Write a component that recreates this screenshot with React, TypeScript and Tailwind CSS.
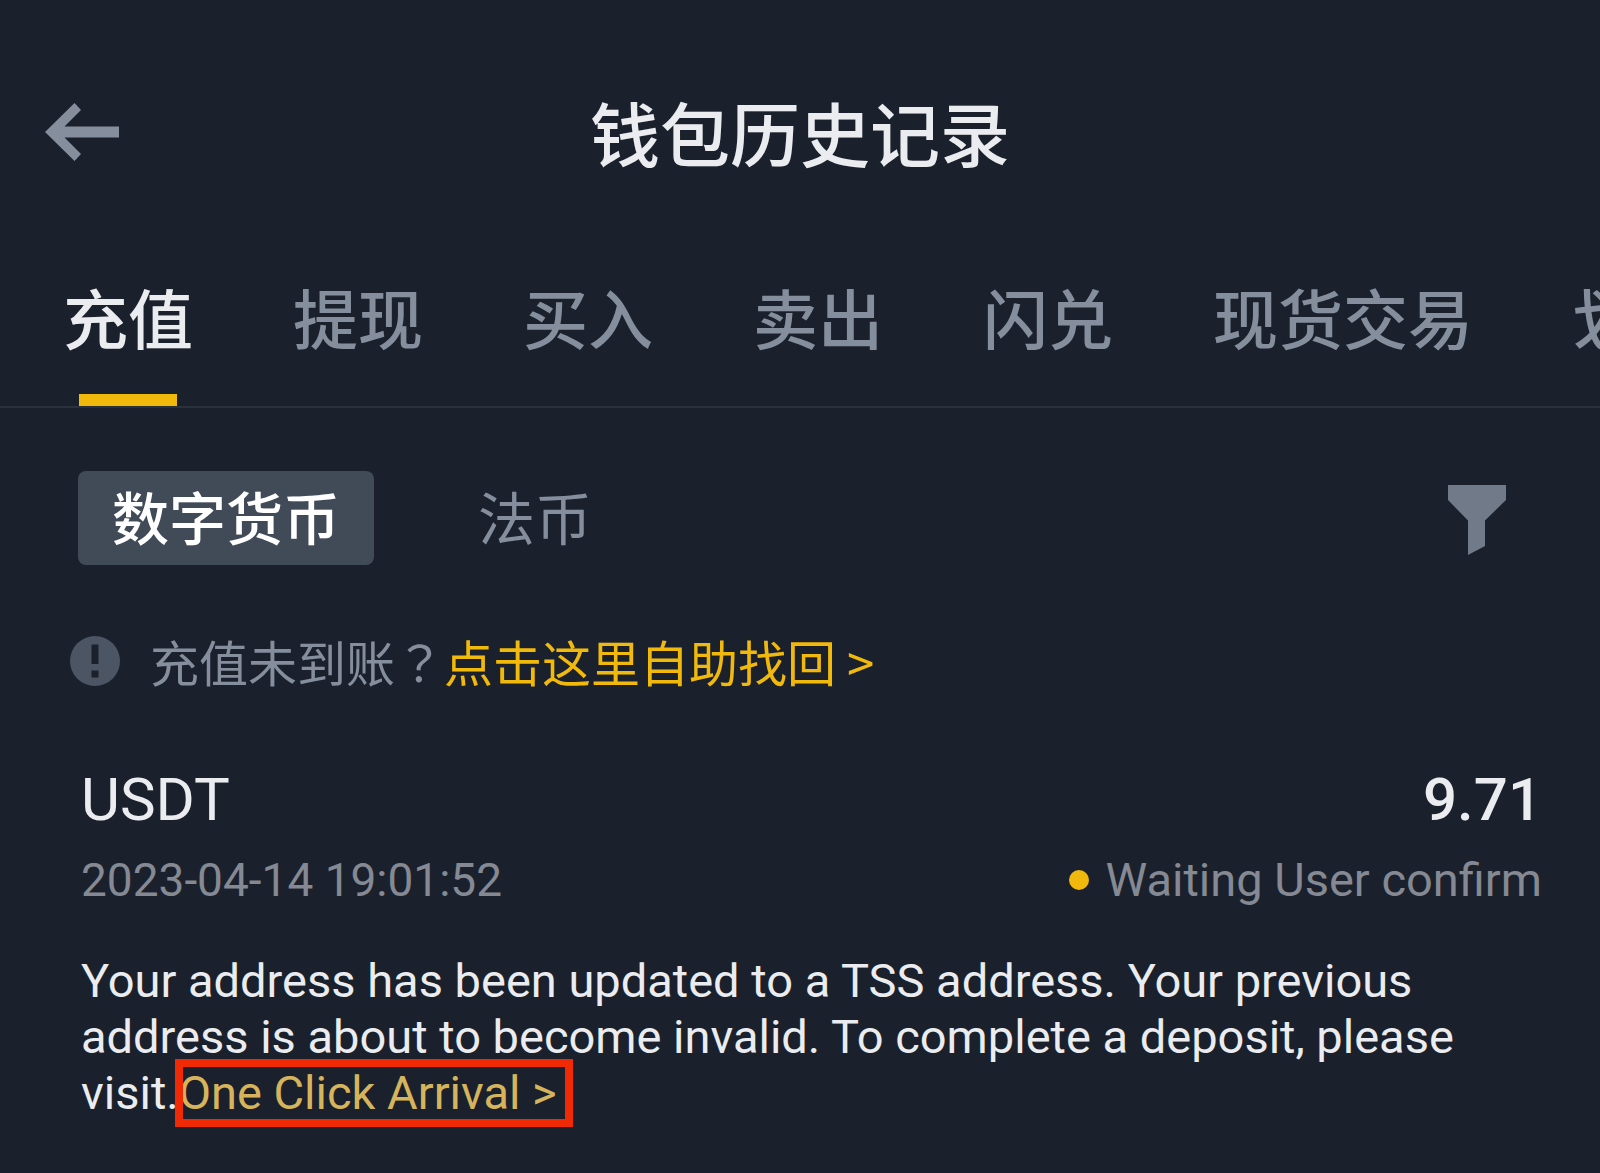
import { useState } from "react";

const tabs = ["充值", "提现", "买入", "卖出", "闪兑", "现货交易", "划转"];
const currencyTypes = ["数字货币", "法币"];

interface DepositRecord {
  coin: string;
  time: string;
  amount: string;
  status: string;
}

const record: DepositRecord = {
  coin: "USDT",
  time: "2023-04-14 19:01:52",
  amount: "9.71",
  status: "Waiting User confirm",
};

const BackIcon = () => (
  <svg width="74" height="58" viewBox="0 0 74 58" aria-hidden="true">
    <path
      d="M0 29 29.5 0 36 7 19.500 23.500H74V34.500H19.500L36 51 29.500 58Z"
      fill="#848e9c"
    />
  </svg>
);

const FilterIcon = () => (
  <svg width="58" height="70" viewBox="0 0 58 70" aria-hidden="true">
    <path d="M0 0H58V15L37 35.500V61L20 70V35.500L0 15Z" fill="#717a89" />
  </svg>
);

const InfoIcon = () => (
  <svg width="50" height="50" viewBox="0 0 50 50" aria-hidden="true" className="shrink-0">
    <circle cx="25" cy="25" r="25" fill="#4c5564" />
    <path d="M21.500 8.500H28.500V28H21.500ZM21.500 34.500H28.500V41.500H21.500Z" fill="#1b212c" />
  </svg>
);

const Header = () => (
  <header className="grid grid-cols-[1fr_auto_1fr] items-center px-[45px] pt-[80px]">
    <button type="button" aria-label="返回" className="w-[74px]">
      <BackIcon />
    </button>
    <h1 className="text-[70px] leading-[104px] font-medium text-[#eaecef]">钱包历史记录</h1>
  </header>
);

interface TabsProps {
  active: string;
  onChange: (tab: string) => void;
}

const Tabs = ({ active, onChange }: TabsProps) => (
  <nav className="mt-[84px] flex gap-[100px] overflow-hidden border-b-2 border-[#2b313c] pl-[63px]">
    {tabs.map((tab) => (
      <button
        key={tab}
        type="button"
        onClick={() => onChange(tab)}
        className={
          tab === active
            ? "flex shrink-0 flex-col items-center text-[65px] leading-[96px] font-medium text-[#eaecef]"
            : "flex shrink-0 flex-col items-center text-[65px] leading-[96px] font-medium text-[#848e9c]"
        }
      >
        {tab}
        {tab === active && <span className="mt-[30px] h-3 w-[98px] bg-[#f0b90b]" />}
      </button>
    ))}
  </nav>
);

const CurrencyFilter = () => {
  const [type, setType] = useState(currencyTypes[0]);

  return (
    <div className="flex items-center justify-between pr-9">
      <div className="flex gap-[70px]">
        {currencyTypes.map((item) => (
          <button
            key={item}
            type="button"
            onClick={() => setType(item)}
            className={
              item === type
                ? "rounded-lg bg-[#414b58] px-[34px] pb-1.5 text-[57px] leading-[88px] font-medium text-white"
                : "rounded-lg px-[34px] pb-1.5 text-[57px] leading-[88px] text-[#848e9c]"
            }
          >
            {item}
          </button>
        ))}
      </div>
      <button type="button" aria-label="筛选" className="pt-1">
        <FilterIcon />
      </button>
    </div>
  );
};

const RecordItem = ({ coin, time, amount, status }: DepositRecord) => (
  <article className="mt-[63px] pl-[3px] font-['Roboto','Noto_Sans_CJK_SC',sans-serif]">
    <div className="flex items-center justify-between text-[60px] leading-[80px] text-[#eaecef]">
      <h2>{coin}</h2>
      <p className="font-medium">{amount}</p>
    </div>
    <div className="flex items-center justify-between leading-[80px] text-[#848993]">
      <time className="text-[46px]">{time}</time>
      <p className="flex items-center gap-4 text-[47px]">
        <span className="size-5 rounded-full bg-[#f0b90b]" />
        {status}
      </p>
    </div>
    <p className="mt-[33px] text-[47px] leading-[56px] text-[#eaecef]">
      Your address has been updated to a TSS address. Your previous address is about to become
      invalid. To complete a deposit, please visit.
      <a
        href="#one-click-arrival"
        className="-my-1 inline-block pr-3 leading-[60px] text-[#d6b45c] outline-8 -outline-offset-4 outline-[#f02a05]"
      >
        One Click Arrival &gt;
      </a>
    </p>
  </article>
);

export default function App() {
  const [tab, setTab] = useState(tabs[0]);

  return (
    <div className="min-h-screen bg-[#1b212c] font-['Noto_Sans_CJK_SC',sans-serif]">
      <Header />
      <Tabs active={tab} onChange={setTab} />
      <main className="pt-[63px] pr-[58px] pl-[78px]">
        <CurrencyFilter />
        <div className="mt-[60px] -ml-2 flex items-center text-[49px] leading-[72px]">
          <InfoIcon />
          <p className="ml-[30px] text-[#848e9c]">
            充值未到账
            <span lang="zh-Hant" className="font-['Noto_Sans_CJK_TC',sans-serif]">？</span>
            <a href="#recover" className="text-[#f0b90b]">
              点击这里自助找回 &gt;
            </a>
          </p>
        </div>
        <RecordItem {...record} />
      </main>
    </div>
  );
}
